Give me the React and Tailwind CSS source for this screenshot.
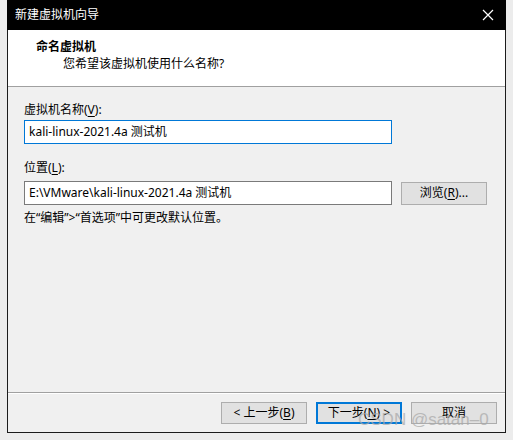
import React from 'react';

const FONT = { fontFamily: '"Noto Sans", "Noto Sans CJK SC", sans-serif' };

const Key = ({ children }) => <span className="underline underline-offset-2">{children}</span>;

const Button = ({ children, primary }) => (
  <button
    className={`w-[86px] h-[22px] flex items-center justify-center text-[12px] text-black bg-[#e1e1e1] ${
      primary ? 'border-2 border-[#0078d7]' : 'border border-[#adadad]'
    }`}
  >
    {children}
  </button>
);

export default function App() {
  return (
    <div className="relative w-[513px] h-[440px] bg-[#ececec] pl-[7px] pr-[7px]" style={FONT}>
      <div className="w-[499px] h-[433px] flex flex-col border-x border-b border-[#1b1b1b] bg-[#f0f0f0]">
        {/* title bar */}
        <div className="h-[30px] bg-black flex items-center justify-between pl-[8px] pr-[10px] -mx-px">
          <span className="text-white text-[12px]">新建虚拟机向导</span>
          <svg width="12" height="12" viewBox="0 0 12 12" className="mr-[2px]">
            <path d="M1 1 L11 11 M11 1 L1 11" stroke="white" strokeWidth="1.2" />
          </svg>
        </div>

        {/* header */}
        <div className="h-[57px] bg-white border-b border-[#a0a0a0] pl-[28px] pt-[9px]">
          <div className="text-[12px] font-bold text-black leading-[16px]">命名虚拟机</div>
          <div className="text-[12px] text-black leading-[16px] pl-[27px] mt-[1px]">您希望该虚拟机使用什么名称?</div>
        </div>

        {/* body */}
        <div className="flex-1 pl-[16px] pt-[15px] text-[12px] text-black">
          <div className="leading-[16px]">虚拟机名称(<Key>V</Key>):</div>
          <div className="mt-[2px] w-[368px] h-[24px] bg-white border border-[#0078d7] flex items-center pl-[4px]">
            kali-linux-2021.4a 测试机
          </div>
          <div className="leading-[16px] mt-[16px]">位置(<Key>L</Key>):</div>
          <div className="mt-[5px] flex items-center gap-[9px]">
            <div className="w-[368px] h-[24px] bg-white border border-[#7a7a7a] flex items-center pl-[4px]">
              E:\VMware\kali-linux-2021.4a 测试机
            </div>
            <button className="w-[86px] h-[23px] flex items-center justify-center bg-[#e1e1e1] border border-[#adadad]">
              浏览(<Key>R</Key>)...
            </button>
          </div>
          <div className="leading-[16px] mt-[5px]">在“编辑”&gt;“首选项”中可更改默认位置。</div>
        </div>

        {/* footer */}
        <div className="border-t border-[#a0a0a0]">
          <div className="border-t border-white pt-[8px] pb-[8px] pr-[8px] flex justify-end gap-[9px]">
            <Button>&lt; 上一步(<Key>B</Key>)</Button>
            <Button primary>下一步(<Key>N</Key>) &gt;</Button>
            <Button>取消</Button>
          </div>
        </div>
      </div>

      {/* watermark */}
      <div
        className="absolute left-[358px] top-[410px] text-[17px] leading-[20px] text-[#a8a8a8] opacity-70 pointer-events-none"
        style={{ fontFamily: '"Liberation Sans", sans-serif' }}
      >
        CSDN @satan–0
      </div>
    </div>
  );
}
